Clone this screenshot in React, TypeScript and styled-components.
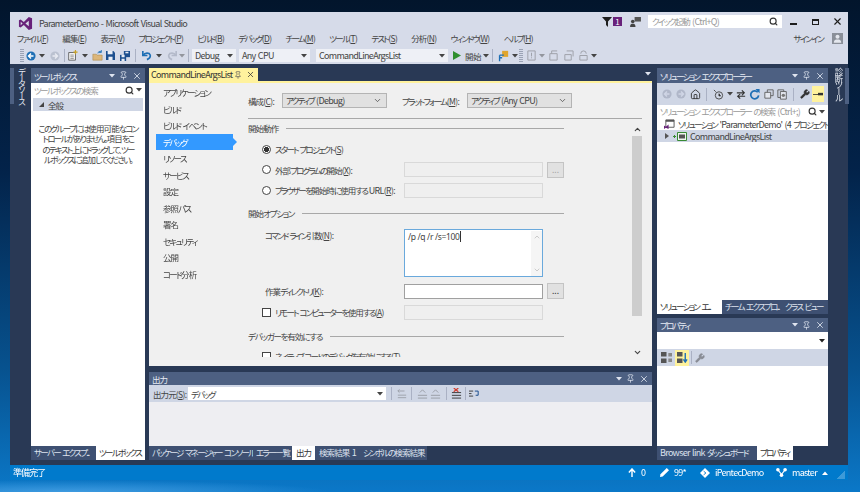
import React from 'react';
import styled, { createGlobalStyle } from 'styled-components';
import { ChevronDown, ChevronUp, Home, Pin, Search, Wrench, X } from 'lucide-react';

const GlobalStyle = createGlobalStyle`
  html, body { margin: 0; padding: 0; }
  body {
    font-family: "Noto Sans CJK JP", "Noto Sans", sans-serif;
    font-size: 8.5px;
    font-feature-settings: "palt";
    letter-spacing: -1.7px;
    word-spacing: 2px;
    color: #444;
  }
  u { text-underline-offset: 1px; }
`;

const Lt = styled.span`
  font-size: 9px;
  letter-spacing: -0.7px;
  word-spacing: 1px;
`;

const AccelText = styled.span`
  font-size: 8.5px;
  letter-spacing: -0.6px;
`;

const Accel: React.FC<{ k: string; colon?: boolean }> = ({ k, colon }) => (
  <AccelText>(<u>{k}</u>){colon ? ':' : ''}</AccelText>
);

const Kj = styled.span`
  letter-spacing: -0.9px;
`;

// kanji need more room than the narrow kana around them
const Jp: React.FC<{ t: string }> = ({ t }) => (
  <>
    {t.split(/([\u3400-\u9fff]+)/).map((part, i) => (i % 2 ? <Kj key={i}>{part}</Kj> : part))}
  </>
);

const Caret: React.FC<{ color?: string; up?: boolean }> = ({ color = '#444', up }) => (
  <svg width="6" height="4" viewBox="0 0 6 4" style={{ flex: 'none' }}>
    <path d={up ? 'M0 4h6L3 .5z' : 'M0 0h6L3 3.5z'} fill={color} />
  </svg>
);

const GroupCaret = () => (
  <svg width="5" height="5" viewBox="0 0 5 5" style={{ flex: 'none' }}>
    <path d="M5 0v5H0z" fill="#444" />
  </svg>
);

const VsLogo = () => (
  <svg width="15" height="15" viewBox="0 0 16 16" style={{ marginTop: 3 }}>
    <path
      fillRule="evenodd"
      fill="#68217a"
      d="M11.5 1 6.2 6.3 2.8 3.7 1 4.6v6.8l1.8.9 3.4-2.6 5.3 5.3 3.5-1.4V2.4zM11.5 5v6L7.9 8zM2.9 6.2 4.9 8l-2 1.8z"
    />
  </svg>
);

const RoundArrow: React.FC<{ bg: string; fg?: string; flip?: boolean }> = ({ bg, fg = '#fff', flip }) => (
  <svg width="10" height="10" viewBox="0 0 12 12" style={flip ? { transform: 'scaleX(-1)' } : undefined}>
    <circle cx="6" cy="6" r="5.5" fill={bg} />
    <path d="M6 3 3 6l3 3M3.4 6H9" stroke={fg} strokeWidth="1.7" fill="none" />
  </svg>
);

const NewProjectIcon = () => (
  <svg width="11" height="11" viewBox="0 0 13 13">
    <path d="M2 3h8v9H2z" fill="#f6f6f6" stroke="#555" />
    <path d="M4 6h4M4 8h4M4 10h4" stroke="#888" />
    <path d="M10 0v5M7.5 2.500h5" stroke="#c9a227" strokeWidth="1.4" />
  </svg>
);

const OpenIcon = () => (
  <svg width="11" height="11" viewBox="0 0 13 13">
    <path d="M1 5h4l1 1h6v6H1z" fill="#dcb67a" stroke="#a8843f" strokeWidth=".6" />
    <path d="M7 4c0-2 2-3 4-2M11 0v3H8" stroke="#1e6fb5" fill="none" />
  </svg>
);

const SaveIcon = () => (
  <svg width="9" height="9" viewBox="0 0 11 11">
    <path d="M0 0h9l2 2v9H0z" fill="#1d4f8f" />
    <path d="M2 0h6v4H2z" fill="#e8edf5" />
    <path d="M3 7h5v4H3z" fill="#e8edf5" />
  </svg>
);

const SaveAllIcon = () => (
  <svg width="10" height="10" viewBox="0 0 13 13">
    <path d="M5 0h8v8H5z" fill="#1d4f8f" />
    <path d="M7 1h4v2H7z" fill="#e8edf5" />
    <path d="M0 5h8v8H0z" fill="#1d4f8f" />
    <path d="M2 5h4v3H2zM2 10h4v3H2z" fill="#e8edf5" />
  </svg>
);

const UndoIcon: React.FC<{ color: string; flip?: boolean }> = ({ color, flip }) => (
  <svg width="11" height="11" viewBox="0 0 12 12" style={flip ? { transform: 'scaleX(-1)' } : undefined}>
    <path d="M2 1v5h5" stroke={color} strokeWidth="1.8" fill="none" />
    <path d="M2.500 5.500C4 3 9 2.500 10 5.500c.6 2-1.200 4-3.500 5" stroke={color} strokeWidth="1.8" fill="none" />
  </svg>
);

const PlayIcon = () => (
  <svg width="8" height="9" viewBox="0 0 9 10"><path d="M0 0l9 5-9 5z" fill="#2f8f2f" /></svg>
);

const BrowseLinkIcon = () => (
  <svg width="12" height="12" viewBox="0 0 14 14">
    <path d="M6 1h7v7H6z" fill="#e0a52d" />
    <path d="M3 6v7M3 6h5M6 9H3" stroke="#1e6fb5" strokeWidth="1.6" fill="none" />
  </svg>
);

const FadedGlyph: React.FC<{ d: string; color?: string }> = ({ d, color = '#a9aebb' }) => (
  <svg width="11" height="11" viewBox="0 0 12 12"><path d={d} stroke={color} fill="none" /></svg>
);

const FilterIcon = () => (
  <svg width="10" height="10" viewBox="0 0 10 10"><path d="M0 0h10L6 4.500V10L4 8V4.500z" fill="#1e1e1e" /></svg>
);

const FeedbackIcon = () => (
  <svg width="11" height="10" viewBox="0 0 12 11">
    <path d="M5 0h7v5H5z" fill="#555" />
    <circle cx="3" cy="5" r="2" fill="#444" />
    <path d="M0 11c0-3 1.500-3.500 3-3.500s3 .5 3 3.500z" fill="#444" />
  </svg>
);

const Avatar = () => (
  <svg width="11" height="11" viewBox="0 0 12 12">
    <path d="M0 0h12v12H0z" fill="#8a8f99" />
    <circle cx="6" cy="4.200" r="2.200" fill="#e4e7ee" />
    <path d="M2 10.500c0-3 2-3.500 4-3.500s4 .5 4 3.500z" fill="#e4e7ee" />
  </svg>
);

const SolutionIcon = () => (
  <svg width="11" height="11" viewBox="0 0 12 12" style={{ flex: 'none' }}>
    <path d="M2 1h9v8H2z" fill="#fff" stroke="#555" />
    <path d="M2 1h9v2H2z" fill="#555" />
    <path d="M0 7l2 1.500L5 6v5L2 9.500 0 11z" fill="#68217a" />
  </svg>
);

const ProjectIcon = () => (
  <svg width="14" height="9" viewBox="0 0 14 9" style={{ flex: 'none' }}>
    <path d="M0 4.500h3M1.500 3v3" stroke="#388a34" />
    <path d="M4.500.5h9v8h-9z" fill="#eef6ee" stroke="#388a34" />
    <path d="M6 2.500h6v4H6z" fill="#555" />
  </svg>
);

const SortIcon: React.FC<{ active?: boolean }> = ({ active }) => (
  <svg width="11" height="11" viewBox="0 0 12 12">
    <path d="M0 0h6v5H0zM0 7h6v5H0z" fill="#555" />
    {active
      ? <path d="M9 1v9M7 8l2 3 2-3" stroke="#1e6fb5" strokeWidth="1.500" fill="none" />
      : <path d="M8 1h4v4H8zM8 7h4v4H8z" fill="#888" />}
  </svg>
);

const ClearIcon = () => (
  <svg width="11" height="11" viewBox="0 0 12 12">
    <path d="M1 5h10M1 8h10M1 11h10" stroke="#333" />
    <path d="M3 0l5 4M8 0L3 4" stroke="#d13a2a" strokeWidth="1.300" />
  </svg>
);

const WrapIcon = () => (
  <svg width="11" height="10" viewBox="0 0 12 11">
    <path d="M0 2h5M0 5h3M0 8h5" stroke="#444" strokeWidth="1.200" />
    <path d="M7 2h4v5H8" stroke="#1d4f8f" strokeWidth="1.200" fill="none" />
  </svg>
);

const HistoryIcon = () => (
  <svg width="11" height="11" viewBox="0 0 12 12">
    <circle cx="6.500" cy="7" r="4" fill="none" stroke="#444" />
    <path d="M6.500 5v2.500h2M1 1l2 2" stroke="#444" />
  </svg>
);

const SyncIcon = () => (
  <svg width="10" height="9" viewBox="0 0 12 10">
    <path d="M1 3h9M7 0l3 3-3 3" stroke="#333" strokeWidth="1.300" fill="none" />
    <path d="M11 7H2M5 4.500 2 7l3 3" stroke="#333" strokeWidth="1.300" fill="none" />
  </svg>
);

const RefreshIcon = () => (
  <svg width="11" height="11" viewBox="0 0 12 12">
    <path d="M9.500 3.500A4.300 4.300 0 1 0 10.500 7" stroke="#1e6fb5" strokeWidth="1.900" fill="none" />
    <path d="M7 0h4.500v4.500z" fill="#1e6fb5" />
  </svg>
);

const CopyIcon = () => (
  <svg width="10" height="10" viewBox="0 0 12 12">
    <path d="M4 1h7v7H4z" fill="none" stroke="#555" />
    <path d="M1 4h7v7H1z" fill="#e3e6ee" stroke="#555" />
  </svg>
);

const FilesIcon = () => (
  <svg width="11" height="11" viewBox="0 0 13 13">
    <path d="M1 1h7v9H1z" fill="none" stroke="#555" />
    <path d="M4 3h7v9H4z" fill="#e3e6ee" stroke="#555" />
    <circle cx="7.500" cy="7.500" r="2" fill="#777" />
  </svg>
);

const AutoHideIcon = () => (
  <svg width="10" height="5" viewBox="0 0 12 6">
    <path d="M0 3h6" stroke="#333" />
    <path d="M6 1h6v3H6z" fill="#333" />
  </svg>
);

const ArrowUpIcon = () => (
  <svg width="8" height="9" viewBox="0 0 9 10">
    <path d="M4.500 10V2M1 5l3.500-4L8 5" stroke="#fff" strokeWidth="1.600" fill="none" />
  </svg>
);

const PencilIcon = () => (
  <svg width="9" height="9" viewBox="0 0 10 10"><path d="M7.500 0 10 2.500 3 9.500 0 10l.5-3z" fill="#fff" /></svg>
);

const RepoIcon = () => (
  <svg width="10" height="10" viewBox="0 0 11 11">
    <path d="M5.500 0 11 5.500 5.500 11 0 5.500z" fill="#fff" />
    <path d="M4 3.500 6.500 5.500 4 7.500" stroke="#007acc" fill="none" />
  </svg>
);

const BranchIcon = () => (
  <svg width="11" height="9" viewBox="0 0 12 10">
    <path d="M2 2l4 5 4-5M6 7v2" stroke="#fff" strokeWidth="1.200" fill="none" />
    <circle cx="2" cy="2" r="2" fill="#fff" />
    <circle cx="10" cy="2" r="2" fill="#fff" />
    <circle cx="6" cy="8" r="2" fill="#fff" />
  </svg>
);

const Desktop = styled.div`
  width: 860px;
  height: 492px;
  box-sizing: border-box;
  padding: 12px 12px 12px 10px;
  overflow: hidden;
  background:
    radial-gradient(ellipse 260px 12px at 70px 492px, #3f9be0 0%, transparent 100%),
    linear-gradient(180deg, #02152c 0%, #03234a 35%, #07528f 75%, #0b78c8 100%);
`;

// the source is a scaled-down capture, so everything in it is a little soft
const Window = styled.div`
  height: 100%;
  display: flex;
  flex-direction: column;
  background: #293955;
  filter: blur(0.3px);
`;

const Chrome = styled.header`
  height: 52px;
  flex: none;
  background: #d6dbe9;
  display: flex;
  flex-direction: column;
`;

const TitleRow = styled.div`
  height: 19px;
  display: flex;
  align-items: center;
  padding-left: 8px;
`;

const WindowTitle = styled(Lt)`
  margin: 3px 0 0 6px;
  flex: 1;
`;

const Badge = styled.span`
  width: 9px;
  height: 9px;
  margin-left: 1px;
  background: #68217a;
  color: #fff;
  font-size: 8px;
  line-height: 9px;
  text-align: center;
  letter-spacing: 0;
`;

const QuickLaunch = styled.div`
  width: 134px;
  height: 13px;
  background: #fff;
  color: #999;
  display: flex;
  align-items: center;
  justify-content: space-between;
  padding: 0 4px;
  box-sizing: border-box;
`;

const WindowButton = styled.span`
  width: 22px;
  display: flex;
  justify-content: center;
  color: #1e1e1e;
`;

const MinGlyph = styled.span`
  width: 7px;
  height: 2px;
  margin-top: 4px;
  background: #1e1e1e;
`;

const MaxGlyph = styled.span`
  width: 7px;
  height: 6px;
  box-sizing: border-box;
  border: 1px solid #1e1e1e;
  border-top-width: 2px;
`;

const MenuRow = styled.nav`
  height: 14px;
  display: flex;
  align-items: center;
  gap: 14px;
  padding: 0 5px 0 7px;
`;

const SignIn = styled.span`
  margin-left: auto;
  display: flex;
  align-items: center;
  gap: 9px;
`;

const ToolRow = styled.div`
  height: 15px;
  margin-top: 3px;
  display: flex;
  align-items: center;
  padding-left: 10px;
`;

const Grip = styled.span`
  width: 4px;
  height: 13px;
  flex: none;
  background: repeating-linear-gradient(180deg, #9ba3b5 0 1px, transparent 1px 2px);
`;

const Slot = styled.span<{ $w: number; $faded?: boolean }>`
  width: ${({ $w }) => $w}px;
  height: 14px;
  flex: none;
  display: flex;
  align-items: center;
  justify-content: center;
  opacity: ${({ $faded }) => ($faded ? 0.45 : 1)};
`;

const Separator = styled.span<{ $m?: number }>`
  width: 1px;
  height: 13px;
  flex: none;
  margin: 0 ${({ $m }) => $m ?? 4}px;
  background: #aab1c4;
`;

const ComboBox = styled.span<{ $w: number; $mr?: number }>`
  width: ${({ $w }) => $w}px;
  margin-right: ${({ $mr }) => $mr ?? 3}px;
  height: 13px;
  flex: none;
  box-sizing: border-box;
  background: #eef0f6;
  color: #444;
  padding: 0 3px;
  display: flex;
  align-items: center;
  justify-content: space-between;
`;

const StartText = styled.span`
  margin-left: 3px;
  width: 17px;
  letter-spacing: -0.6px;
`;

const Main = styled.main`
  flex: 1;
  min-height: 0;
  display: flex;
  padding: 4px 0 5px;
`;

const Rail = styled.aside<{ $side: 'left' | 'right' }>`
  width: 20px;
  flex: none;
  display: flex;
  flex-direction: ${({ $side }) => ($side === 'left' ? 'row' : 'row-reverse')};
  margin-${({ $side }) => ($side === 'left' ? 'right' : 'left')}: 1px;
`;

const RailMark = styled.span`
  width: 4px;
  height: 36px;
  background: #4d6082;
`;

const RailText = styled.span<{ $right?: boolean }>`
  writing-mode: vertical-rl;
  color: #e6eaf2;
  margin: ${({ $right }) => ($right ? '0 1px 0 0' : '0 0 0 3px')};
  font-size: 8.5px;
  line-height: 10px;
  letter-spacing: ${({ $right }) => ($right ? -2 : -2.5)}px;
`;

const Column = styled.div<{ $w: number; $mr?: number }>`
  width: ${({ $w }) => $w}px;
  flex: none;
  margin-right: ${({ $mr }) => $mr ?? 0}px;
  display: flex;
  flex-direction: column;
`;

const Panel = styled.section<{ $h?: number; $top?: number }>`
  flex: ${({ $h }) => ($h ? `0 0 ${$h}px` : '1')};
  margin-top: ${({ $top }) => $top ?? 0}px;
  min-height: 0;
  display: flex;
  flex-direction: column;
`;

const PanelTitle = styled.div<{ $h?: number }>`
  height: ${({ $h }) => $h ?? 15}px;
  flex: none;
  background: #4d6082;
  color: #e8ecf5;
  display: flex;
  align-items: center;
  justify-content: space-between;
  padding: 0 3px;
  white-space: nowrap;
`;

const TitleIcons = styled.span`
  display: flex;
  align-items: center;
  gap: 4px;
`;

const PanelBody = styled.div<{ $bg?: string }>`
  flex: 1;
  min-height: 0;
  background: ${({ $bg }) => $bg ?? '#fff'};
  display: flex;
  flex-direction: column;
`;

const SearchBox = styled.div<{ $h?: number }>`
  height: ${({ $h }) => $h ?? 14}px;
  flex: none;
  background: #fff;
  color: #9a9a9a;
  display: flex;
  align-items: center;
  justify-content: space-between;
  padding: 0 3px;
  white-space: nowrap;
`;

const SearchIcons = styled.span`
  display: flex;
  align-items: center;
  gap: 2px;
`;

const GroupHeader = styled.div`
  height: 13px;
  margin: 1px 2px 0;
  background: #cfd6e5;
  display: flex;
  align-items: center;
  gap: 4px;
  padding-left: 6px;
`;

const EmptyNote = styled.p`
  margin: 12px 0 0;
  line-height: 10.4px;
  text-align: center;
  white-space: nowrap;
`;

const TabStrip = styled.div`
  height: 14px;
  flex: none;
  display: flex;
  background: #293955;
`;

const BottomTab = styled.span<{ $w: number; $active?: boolean; $pad?: number }>`
  width: ${({ $w }) => $w}px;
  flex: none;
  box-sizing: border-box;
  padding-left: ${({ $pad }) => $pad ?? 3}px;
  line-height: 13px;
  white-space: nowrap;
  overflow: hidden;
  background: ${({ $active }) => ($active ? '#fff' : '#3e5072')};
  color: ${({ $active }) => ($active ? '#333' : '#dde2ee')};
`;

const DocTabs = styled.div`
  height: 13px;
  flex: none;
  display: flex;
  justify-content: space-between;
`;

const DocTab = styled.span`
  width: 109px;
  box-sizing: border-box;
  background: #fff29d;
  color: #333;
  padding: 0 3px 0 2px;
  display: flex;
  align-items: center;
  justify-content: space-between;
`;

const DocMenu = styled.span`
  display: flex;
  margin: 4px 1px 0 0;
  height: 5px;
`;

const DocPage = styled.div`
  height: 283px;
  flex: none;
  border-top: 2px solid #fff29d;
  background: #f0f0f0;
  display: flex;
`;

const PropNav = styled.ul`
  width: 99px;
  flex: none;
  list-style: none;
  margin: 0;
  padding: 1px 0 0 7px;
  box-sizing: border-box;
`;

const NavItem = styled.li<{ $active?: boolean }>`
  position: relative;
  width: 77px;
  height: 16.5px;
  line-height: 16px;
  padding-left: 7px;
  box-sizing: border-box;
  background: ${({ $active }) => ($active ? '#3399ff' : 'transparent')};
  color: ${({ $active }) => ($active ? '#fff' : '#444')};
  &::after {
    content: '';
    display: ${({ $active }) => ($active ? 'block' : 'none')};
    position: absolute;
    left: 100%;
    top: 4px;
    border-left: 4px solid #3399ff;
    border-top: 4px solid transparent;
    border-bottom: 4px solid transparent;
  }
`;

const PropForm = styled.div`
  flex: 1;
  min-width: 0;
  margin-right: 10px;
  display: flex;
  flex-direction: column;
`;

const ConfigRow = styled.div`
  height: 15px;
  margin-top: 10px;
  flex: none;
  display: flex;
  align-items: center;
`;

const ConfigLabel = styled.span<{ $w: number; $ml?: number }>`
  width: ${({ $w }) => $w}px;
  margin-left: ${({ $ml }) => $ml ?? 0}px;
  flex: none;
  white-space: nowrap;
`;

const ConfigSelect = styled.span`
  width: 105px;
  height: 15px;
  flex: none;
  box-sizing: border-box;
  background: #e1e1e1;
  border: 1px solid #b4b4b4;
  padding: 0 4px 0 3px;
  display: flex;
  align-items: center;
  justify-content: space-between;
`;

const TopRule = styled.div`
  height: 1px;
  margin-top: 10px;
  flex: none;
  background: #a8a8a8;
`;

const FormBody = styled.div`
  flex: 1;
  min-height: 0;
  display: flex;
`;

const Scroller = styled.div`
  flex: 1;
  height: 238px;
  overflow: hidden;
`;

const ScrollTrack = styled.div`
  width: 10px;
  height: 238px;
  flex: none;
  display: flex;
  flex-direction: column;
  align-items: center;
  padding-top: 6px;
  box-sizing: border-box;
`;

const ScrollThumb = styled.div`
  width: 10px;
  height: 181px;
  margin: 2px 0 32px;
  background: #cdcdcd;
`;

const Section = styled.div<{ $top: number }>`
  width: 316px;
  margin-top: ${({ $top }) => $top}px;
  height: 16px;
  display: flex;
  align-items: center;
  gap: 8px;
  white-space: nowrap;
  letter-spacing: -1.3px;
  &::after {
    content: '';
    flex: 1;
    height: 1px;
    background: #a8a8a8;
  }
`;

const FieldRow = styled.div<{ $top: number; $h?: number }>`
  width: 316px;
  height: ${({ $h }) => $h ?? 16}px;
  margin-top: ${({ $top }) => $top}px;
  display: grid;
  grid-template-columns: 152px 139px 17px;
  column-gap: 4px;
  align-items: center;
`;

const FieldLabel = styled.label<{ $indent: number; $alignTop?: boolean }>`
  padding-left: ${({ $indent }) => $indent}px;
  display: flex;
  align-items: center;
  gap: 4px;
  white-space: nowrap;
  letter-spacing: -1.8px;
  word-spacing: 1.5px;
  align-self: ${({ $alignTop }) => ($alignTop ? 'start' : 'center')};
`;

const Radio = styled.span<{ $checked?: boolean }>`
  width: 9px;
  height: 9px;
  flex: none;
  box-sizing: border-box;
  border: 1px solid #444;
  border-radius: 50%;
  background: ${({ $checked }) => ($checked ? 'radial-gradient(circle, #333 0 2.400px, #fff 2.800px)' : '#fff')};
`;

const CheckBox = styled.span`
  width: 9px;
  height: 9px;
  flex: none;
  box-sizing: border-box;
  border: 1px solid #444;
  background: #fff;
`;

const TextField = styled.span<{ $disabled?: boolean }>`
  height: 15px;
  box-sizing: border-box;
  background: ${({ $disabled }) => ($disabled ? '#efefef' : '#fff')};
  border: 1px solid ${({ $disabled }) => ($disabled ? '#d9d9d9' : '#a0a0a0')};
`;

const BrowseButton = styled.span<{ $disabled?: boolean }>`
  height: 16px;
  box-sizing: border-box;
  border: 1px solid #c4c4c4;
  background: #e1e1e1;
  color: ${({ $disabled }) => ($disabled ? '#aaa' : '#444')};
  text-align: center;
  line-height: 12px;
  letter-spacing: 0;
`;

const ArgsBox = styled.div`
  height: 48px;
  box-sizing: border-box;
  border: 1px solid #6aa9dc;
  background: #fff;
  display: flex;
  justify-content: space-between;
  padding: 1px 0 0 3px;
  font-family: "Noto Sans", sans-serif;
  font-size: 8.500px;
  letter-spacing: -0.35px;
  word-spacing: 0;
  line-height: 12px;
`;

const Caretline = styled.span`
  border-right: 1px solid #333;
`;

const ArgsScroll = styled.span`
  width: 11px;
  display: flex;
  flex-direction: column;
  justify-content: space-between;
  align-items: center;
  color: #b5b5b5;
  padding: 2px 0;
  background: #f5f5f5;
`;

const SubToolbar = styled.div<{ $h: number }>`
  height: ${({ $h }) => $h}px;
  flex: none;
  background: #cfd6e5;
  display: flex;
  align-items: center;
`;

const OutputLabel = styled.span`
  width: 35px;
  margin: 0 0 0 4px;
  flex: none;
  white-space: nowrap;
`;

const OutputCombo = styled.span`
  width: 198px;
  height: 13px;
  flex: none;
  box-sizing: border-box;
  background: #fff;
  padding: 0 3px;
  display: flex;
  align-items: center;
  justify-content: space-between;
`;

const Highlighted = styled.span<{ $w?: number }>`
  width: ${({ $w }) => $w ?? 12}px;
  height: 16px;
  display: flex;
  align-items: center;
  justify-content: center;
  background: #fff29d;
`;

const TreeRow = styled.div<{ $selected?: boolean }>`
  height: 12px;
  flex: none;
  display: flex;
  align-items: center;
  gap: 3px;
  padding-left: ${({ $selected }) => ($selected ? 8 : 7)}px;
  background: ${({ $selected }) => ($selected ? '#cfd6e5' : 'transparent')};
  white-space: nowrap;
  overflow: hidden;
`;

const Expander = styled.span`
  border-left: 4px solid #555;
  border-top: 3.500px solid transparent;
  border-bottom: 3.500px solid transparent;
  margin-right: 1px;
`;

const PropCombo = styled.div`
  height: 17px;
  flex: none;
  display: flex;
  align-items: center;
  justify-content: flex-end;
  padding-right: 3px;
`;

const StatusBar = styled.footer`
  height: 15px;
  flex: none;
  background: #007acc;
  color: #fff;
  display: flex;
  align-items: center;
  padding: 0 3px;
`;

const StatusText = styled.span`
  margin-right: auto;
  font-size: 9px;
`;

const StatusItem = styled.span<{ $w: number }>`
  width: ${({ $w }) => $w}px;
  flex: none;
  display: flex;
  align-items: center;
  gap: 5px;
`;

const ResizeGrip = styled.span`
  width: 8px;
  height: 8px;
  margin-top: 4px;
  background: linear-gradient(135deg, transparent 50%, #3d9ad8 50%);
`;

const PanelControls = () => (
  <TitleIcons>
    <Caret color="#dfe4ef" />
    <Pin size={9} color="#dfe4ef" />
    <X size={10} color="#dfe4ef" />
  </TitleIcons>
);

const navItems = [
  'アプリケーション', 'ビルド', 'ビルド イベント', 'デバッグ', 'リソース', 'サービス',
  '設定', '参照パス', '署名', 'セキュリティ', '公開', 'コード分析',
];

const menuItems: [string, string][] = [
  ['ファイル', 'F'], ['編集', 'E'], ['表示', 'V'], ['プロジェクト', 'P'], ['ビルド', 'B'], ['デバッグ', 'D'],
  ['チーム', 'M'], ['ツール', 'T'], ['テスト', 'S'], ['分析', 'N'], ['ウィンドウ', 'W'], ['ヘルプ', 'H'],
];

const App: React.FC = () => (
  <Desktop>
    <GlobalStyle />
    <Window>
      <Chrome>
        <TitleRow>
          <VsLogo />
          <WindowTitle>ParameterDemo - Microsoft Visual Studio</WindowTitle>
          <FilterIcon />
          <Badge>1</Badge>
          <Slot $w={26}><FeedbackIcon /></Slot>
          <QuickLaunch>
            <span><Jp t="クイック起動 " /><Lt>(Ctrl+Q)</Lt></span>
            <Search size={9} color="#333" strokeWidth={3} />
          </QuickLaunch>
          <WindowButton><MinGlyph /></WindowButton>
          <WindowButton><MaxGlyph /></WindowButton>
          <WindowButton><X size={11} strokeWidth={2.5} /></WindowButton>
        </TitleRow>
        <MenuRow>
          {menuItems.map(([label, key]) => (
            <span key={key}><Jp t={label} /><Accel k={key} /></span>
          ))}
          <SignIn>サインイン<Avatar /></SignIn>
        </MenuRow>
        <ToolRow>
          <Grip />
          <Slot $w={14}><RoundArrow bg="#1e6fb5" /></Slot>
          <Slot $w={8}><Caret /></Slot>
          <Slot $w={18} $faded><RoundArrow bg="#9aa2b3" flip /></Slot>
          <Separator $m={0} />
          <Slot $w={14}><NewProjectIcon /></Slot>
          <Slot $w={12}><Caret /></Slot>
          <Slot $w={12}><OpenIcon /></Slot>
          <Slot $w={15}><SaveIcon /></Slot>
          <Slot $w={13}><SaveAllIcon /></Slot>
          <Separator $m={4} />
          <Slot $w={12}><UndoIcon color="#1e6fb5" /></Slot>
          <Slot $w={13}><Caret /></Slot>
          <Slot $w={14} $faded><UndoIcon color="#8b93a6" flip /></Slot>
          <Slot $w={6} $faded><Caret /></Slot>
          <Separator $m={3} />
          <ComboBox $w={44}><Lt>Debug</Lt><Caret /></ComboBox>
          <ComboBox $w={71} $mr={6}><Lt>Any CPU</Lt><Caret /></ComboBox>
          <ComboBox $w={132} $mr={4}><Lt>CommandLineArgsList</Lt><Caret /></ComboBox>
          <Slot $w={10}><PlayIcon /></Slot>
          <StartText>開始</StartText>
          <Slot $w={8}><Caret /></Slot>
          <Separator $m={2} />
          <Slot $w={16}><BrowseLinkIcon /></Slot>
          <Slot $w={8}><Caret /></Slot>
          <Grip />
          <Slot $w={16} $faded><FadedGlyph d="M2 1h8v10H2zM6 3v4M6 8v1" color="#555" /></Slot>
          <Slot $w={6} $faded><Caret /></Slot>
          <Slot $w={16} $faded><FadedGlyph d="M2 4h8v7H2zM4 4V1h6" color="#555" /></Slot>
          <Slot $w={15} $faded><FadedGlyph d="M2 5h7v6H2zM4 1h7v6" color="#555" /></Slot>
          <Slot $w={14} $faded><FadedGlyph d="M3 4a3 3 0 1 1 6 0M2 6h8v5H2z" color="#555" /></Slot>
          <Slot $w={8}><Caret /></Slot>
        </ToolRow>
      </Chrome>
      <Main>
        <Rail $side="left">
          <RailMark />
          <RailText>データソース</RailText>
        </Rail>
        <Column $w={114} $mr={4}>
          <Panel>
            <PanelTitle>ツールボックス<PanelControls /></PanelTitle>
            <PanelBody>
              <SearchBox>
                <span><Jp t="ツールボックスの検索" /></span>
                <SearchIcons><Search size={9} color="#333" strokeWidth={3} /><Caret /></SearchIcons>
              </SearchBox>
              <GroupHeader><GroupCaret /><Kj>全般</Kj></GroupHeader>
              <EmptyNote>
                <Jp t="このグループには使用可能なコン" /><br />
                <Jp t="トロールがありません。項目をこ" /><br />
                <Jp t="のテキスト上にドラッグして、ツー" /><br />
                <Jp t="ルボックスに追加してください。" />
              </EmptyNote>
            </PanelBody>
          </Panel>
          <TabStrip>
            <BottomTab $w={65}>サーバー エクスプ...</BottomTab>
            <BottomTab $w={49} $active>ツールボックス</BottomTab>
          </TabStrip>
        </Column>
        <Column $w={503} $mr={5}>
          <DocTabs>
            <DocTab>
              <Lt>CommandLineArgsList</Lt>
              <TitleIcons><Pin size={8} color="#555" /><X size={9} color="#333" /></TitleIcons>
            </DocTab>
            <DocMenu><Caret color="#dfe4ef" /></DocMenu>
          </DocTabs>
          <DocPage>
            <PropNav>
              {navItems.map((item) => (
                <NavItem key={item} $active={item === 'デバッグ'}><Jp t={item} /></NavItem>
              ))}
            </PropNav>
            <PropForm>
              <ConfigRow>
                <ConfigLabel $w={34}><Kj>構成</Kj><Accel k="C" colon /></ConfigLabel>
                <ConfigSelect><span>アクティブ <Lt>(Debug)</Lt></span><ChevronDown size={9} /></ConfigSelect>
                <ConfigLabel $w={65} $ml={15}>プラットフォーム<Accel k="M" colon /></ConfigLabel>
                <ConfigSelect><span>アクティブ <Lt>(Any CPU)</Lt></span><ChevronDown size={9} /></ConfigSelect>
              </ConfigRow>
              <TopRule />
              <FormBody>
                <Scroller>
                  <Section $top={1}><span><Jp t="開始動作" /></span></Section>
                  <FieldRow $top={5}>
                    <FieldLabel $indent={14}><Radio $checked /><span>スタート プロジェクト<Accel k="S" /></span></FieldLabel>
                  </FieldRow>
                  <FieldRow $top={4.5}>
                    <FieldLabel $indent={14}><Radio /><span><Jp t="外部プログラムの開始" /><Accel k="X" colon /></span></FieldLabel>
                    <TextField $disabled />
                    <BrowseButton $disabled>...</BrowseButton>
                  </FieldRow>
                  <FieldRow $top={4.5}>
                    <FieldLabel $indent={14}><Radio /><span><Jp t="ブラウザーを開始時に使用する " /><Lt>URL</Lt><Accel k="R" colon /></span></FieldLabel>
                    <TextField $disabled />
                  </FieldRow>
                  <Section $top={7}><span><Jp t="開始オプション" /></span></Section>
                  <FieldRow $top={8} $h={48}>
                    <FieldLabel $indent={17} $alignTop><span><Jp t="コマンド ライン引数" /><Accel k="N" colon /></span></FieldLabel>
                    <ArgsBox>
                      <span><Caretline>/p /q /r /s=100</Caretline></span>
                      <ArgsScroll><ChevronUp size={8} /><ChevronDown size={8} /></ArgsScroll>
                    </ArgsBox>
                  </FieldRow>
                  <FieldRow $top={6}>
                    <FieldLabel $indent={17}><span><Jp t="作業ディレクトリ" /><Accel k="K" colon /></span></FieldLabel>
                    <TextField />
                    <BrowseButton>...</BrowseButton>
                  </FieldRow>
                  <FieldRow $top={5}>
                    <FieldLabel $indent={14}><CheckBox /><span><Jp t="リモート コンピューターを使用する" /><Accel k="A" /></span></FieldLabel>
                    <TextField $disabled />
                  </FieldRow>
                  <Section $top={8}><span><Jp t="デバッガーを有効にする" /></span></Section>
                  <FieldRow $top={4}>
                    <FieldLabel $indent={14}><CheckBox /><span><Jp t="ネイティブ コードのデバッグを有効にする" /><Accel k="T" /></span></FieldLabel>
                  </FieldRow>
                </Scroller>
                <ScrollTrack>
                  <ChevronUp size={9} strokeWidth={3} color="#444" />
                  <ScrollThumb />
                  <ChevronDown size={9} strokeWidth={3} color="#444" />
                </ScrollTrack>
              </FormBody>
            </PropForm>
          </DocPage>
          <Panel $top={6}>
            <PanelTitle $h={13}><Kj>出力</Kj><PanelControls /></PanelTitle>
            <PanelBody $bg="#eeeef2">
              <SubToolbar $h={17}>
                <OutputLabel><Kj>出力元</Kj><Accel k="S" colon /></OutputLabel>
                <OutputCombo>デバッグ<Caret /></OutputCombo>
                <Separator $m={5} />
                <Slot $w={10} $faded><FadedGlyph d="M1 3h8M3 1 1 3l2 2M1 8h10M1 11h10" color="#555" /></Slot>
                <Separator $m={4} />
                <Slot $w={12} $faded><FadedGlyph d="M3 5 6 2l3 3M1 8h10M1 11h10" color="#555" /></Slot>
                <Slot $w={15} $faded><FadedGlyph d="M3 5 6 2l3 3M1 8h10M1 11h10" color="#555" /></Slot>
                <Separator $m={3} />
                <Slot $w={12}><ClearIcon /></Slot>
                <Separator $m={3} />
                <Slot $w={10}><WrapIcon /></Slot>
              </SubToolbar>
            </PanelBody>
          </Panel>
          <TabStrip>
            <BottomTab $w={104}>パッケージ マネージャー コンソール</BottomTab>
            <BottomTab $w={39}><Jp t="エラー一覧" /></BottomTab>
            <BottomTab $w={23} $active $pad={4}><Kj>出力</Kj></BottomTab>
            <BottomTab $w={45} $pad={4}><Kj>検索結果</Kj> <Lt>1</Lt></BottomTab>
            <BottomTab $w={67}><Jp t="シンボルの検索結果" /></BottomTab>
          </TabStrip>
        </Column>
        <Column $w={171}>
          <Panel $h={246}>
            <PanelTitle>ソリューション エクスプローラー<PanelControls /></PanelTitle>
            <SubToolbar $h={22}>
              <Slot $w={3} />
              <Slot $w={14} $faded><RoundArrow bg="#8b93a6" fg="#cfd6e5" /></Slot>
              <Slot $w={14} $faded><RoundArrow bg="#8b93a6" fg="#cfd6e5" flip /></Slot>
              <Slot $w={14}><Home size={11} color="#333" /></Slot>
              <Separator $m={4} />
              <Slot $w={14}><HistoryIcon /></Slot>
              <Slot $w={10}><Caret /></Slot>
              <Slot $w={11}><SyncIcon /></Slot>
              <Slot $w={16}><RefreshIcon /></Slot>
              <Slot $w={13}><CopyIcon /></Slot>
              <Slot $w={15}><FilesIcon /></Slot>
              <Separator $m={3} />
              <Slot $w={15}><Wrench size={10} color="#333" fill="#333" /></Slot>
              <Highlighted><AutoHideIcon /></Highlighted>
            </SubToolbar>
            <SearchBox $h={13}>
              <span><Jp t="ソリューション エクスプローラー の検索 " /><Lt>(Ctrl+;)</Lt></span>
              <SearchIcons><Search size={9} color="#333" strokeWidth={3} /><Caret /></SearchIcons>
            </SearchBox>
            <PanelBody>
              <TreeRow>
                <SolutionIcon />
                <span>ソリューション <Lt>'ParameterDemo' (4</Lt> プロジェクト<Lt>)</Lt></span>
              </TreeRow>
              <TreeRow $selected>
                <Expander />
                <ProjectIcon />
                <Lt>CommandLineArgsList</Lt>
              </TreeRow>
            </PanelBody>
            <TabStrip>
              <BottomTab $w={65} $active>ソリューション エ...</BottomTab>
              <BottomTab $w={60}>チーム エクスプロ...</BottomTab>
              <BottomTab $w={46}>クラス ビュー</BottomTab>
            </TabStrip>
          </Panel>
          <Panel $top={4}>
            <PanelTitle $h={14}>プロパティ<PanelControls /></PanelTitle>
            <PanelBody>
              <PropCombo><Caret color="#222" /></PropCombo>
              <SubToolbar $h={17}>
                <Slot $w={3} />
                <Slot $w={12}><SortIcon /></Slot>
                <Slot $w={3} />
                <Highlighted $w={14}><SortIcon active /></Highlighted>
                <Separator $m={2} />
                <Slot $w={12} $faded><Wrench size={10} color="#333" fill="#333" /></Slot>
              </SubToolbar>
            </PanelBody>
          </Panel>
          <TabStrip>
            <BottomTab $w={100}><Lt>Browser link</Lt> ダッシュボード</BottomTab>
            <BottomTab $w={36} $active>プロパティ</BottomTab>
          </TabStrip>
        </Column>
        <Rail $side="right">
          <RailMark />
          <RailText $right>診断ツール</RailText>
        </Rail>
      </Main>
      <StatusBar>
        <StatusText><Kj>準備完了</Kj></StatusText>
        <StatusItem $w={32}><ArrowUpIcon /><Lt>0</Lt></StatusItem>
        <StatusItem $w={40}><PencilIcon /><Lt>99*</Lt></StatusItem>
        <StatusItem $w={76}><RepoIcon /><Lt>iPentecDemo</Lt></StatusItem>
        <StatusItem $w={61}><BranchIcon /><Lt>master</Lt><Caret color="#fff" up /></StatusItem>
        <ResizeGrip />
      </StatusBar>
    </Window>
  </Desktop>
);

export default App;
